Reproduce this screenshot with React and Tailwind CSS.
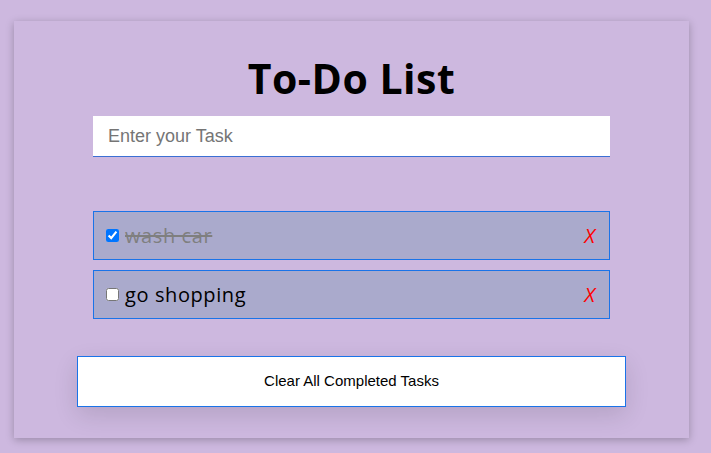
import { useState } from 'react';

export default function App() {
  const [tasks, setTasks] = useState([
    { id: 1, text: 'wash car', done: true },
    { id: 2, text: 'go shopping', done: false },
  ]);

  function toggle(id) {
    setTasks(tasks.map((t) => (t.id === id ? { ...t, done: !t.done } : t)));
  }

  return (
    <div className="w-[711px] h-[453px] bg-[#cdb8df] pt-[21px] pl-[14px] overflow-hidden">
      {/* Card */}
      <div className="w-[675px] h-[417px] bg-[#cdb8df] shadow-[0_2px_8px_rgba(0,0,0,0.25)] flex flex-col items-center pt-[31px]">
        <h1 className="font-['Open_Sans',sans-serif] font-bold text-[41px] leading-[52px] text-black tracking-[0.5px]">
          To-Do List
        </h1>

        <input
          type="text"
          placeholder="Enter your Task"
          className="mt-[12px] w-[517px] h-[41px] bg-white border-b border-[#3b6fd4] px-[15px] font-['Liberation_Sans',Arial,sans-serif] text-[18px] text-black placeholder:text-[#757575] outline-none"
        />

        {/* Task list */}
        <ul className="mt-[54px] flex flex-col gap-[10px]">
          {tasks.map((t) => (
            <li
              key={t.id}
              className="w-[517px] h-[49px] bg-[#aaaacc] border border-[#1a73e8] flex items-center pl-[12px] pr-[14px]"
            >
              <input
                type="checkbox"
                checked={t.done}
                onChange={() => toggle(t.id)}
                className="w-[13px] h-[13px] m-0 accent-[#0075ff]"
              />
              <span
                className={`ml-[6px] font-['Open_Sans',sans-serif] text-[20px] tracking-[0.6px] ${
                  t.done ? 'line-through text-[#7f7f7f]' : 'text-black'
                }`}
              >
                {t.text}
              </span>
              <span className="ml-auto font-['Open_Sans',sans-serif] text-[20px] text-[#ff0000] italic">X</span>
            </li>
          ))}
        </ul>

        <button className="mt-[37px] w-[549px] h-[51px] bg-white border border-[#1a73e8] shadow-[0_8px_24px_rgba(0,0,0,0.12)] font-['Liberation_Sans',Arial,sans-serif] text-[15px] text-black">
          Clear All Completed Tasks
        </button>
      </div>
    </div>
  );
}
